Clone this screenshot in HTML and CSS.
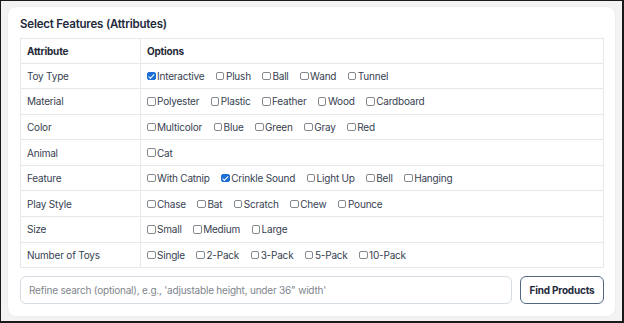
FILE: index.html
```html
<!DOCTYPE html>
<html>
<head>
<meta charset="utf-8">
<link rel="stylesheet" href="styles.css">
</head>
<body>
<div class="frame">
  <div class="card">
    <h2 class="title">Select Features (Attributes)</h2>
    <table class="attrs">
      <thead>
        <tr><th class="c1">Attribute</th><th>Options</th></tr>
      </thead>
      <tbody>
        <tr><td class="c1">Toy Type</td><td><div class="opts">
          <label><input type="checkbox" checked>Interactive</label>
          <label><input type="checkbox">Plush</label>
          <label><input type="checkbox">Ball</label>
          <label><input type="checkbox">Wand</label>
          <label><input type="checkbox">Tunnel</label>
        </div></td></tr>
        <tr><td class="c1">Material</td><td><div class="opts">
          <label><input type="checkbox">Polyester</label>
          <label><input type="checkbox">Plastic</label>
          <label><input type="checkbox">Feather</label>
          <label><input type="checkbox">Wood</label>
          <label><input type="checkbox">Cardboard</label>
        </div></td></tr>
        <tr><td class="c1">Color</td><td><div class="opts">
          <label><input type="checkbox">Multicolor</label>
          <label><input type="checkbox">Blue</label>
          <label><input type="checkbox">Green</label>
          <label><input type="checkbox">Gray</label>
          <label><input type="checkbox">Red</label>
        </div></td></tr>
        <tr><td class="c1">Animal</td><td><div class="opts">
          <label><input type="checkbox">Cat</label>
        </div></td></tr>
        <tr><td class="c1">Feature</td><td><div class="opts">
          <label><input type="checkbox">With Catnip</label>
          <label><input type="checkbox" checked>Crinkle Sound</label>
          <label><input type="checkbox">Light Up</label>
          <label><input type="checkbox">Bell</label>
          <label><input type="checkbox">Hanging</label>
        </div></td></tr>
        <tr><td class="c1">Play Style</td><td><div class="opts">
          <label><input type="checkbox">Chase</label>
          <label><input type="checkbox">Bat</label>
          <label><input type="checkbox">Scratch</label>
          <label><input type="checkbox">Chew</label>
          <label><input type="checkbox">Pounce</label>
        </div></td></tr>
        <tr><td class="c1">Size</td><td><div class="opts">
          <label><input type="checkbox">Small</label>
          <label><input type="checkbox">Medium</label>
          <label><input type="checkbox">Large</label>
        </div></td></tr>
        <tr><td class="c1">Number of Toys</td><td><div class="opts">
          <label><input type="checkbox">Single</label>
          <label><input type="checkbox">2-Pack</label>
          <label><input type="checkbox">3-Pack</label>
          <label><input type="checkbox">5-Pack</label>
          <label><input type="checkbox">10-Pack</label>
        </div></td></tr>
      </tbody>
    </table>
    <div class="search">
      <input class="refine" type="text" placeholder="Refine search (optional), e.g., 'adjustable height, under 36&quot; width'">
      <button class="find">Find Products</button>
    </div>
  </div>
</div>
</body>
</html>
```

FILE: styles.css
```css
* { box-sizing: border-box; }
html, body { margin: 0; padding: 0; }
body {
  font-family: Inter, "Noto Sans", sans-serif;
  color: #1f2937;
}
.frame {
  width: 624px;
  height: 323px;
  border: 1px solid #1a1a1a;
  border-right-width: 2px;
  border-bottom-width: 2px;
  background: #f3f3f3;
  padding: 6px 7px 0 7px;
}
.card {
  background: #fff;
  border-radius: 8px;
  box-shadow: 0 0 2px rgba(0,0,0,0.08);
  height: 309px;
  padding: 10px 11px 0 12px;
}
.title {
  margin: 0 0 6px 0;
  font-size: 11.5px;
  font-weight: 600;
  color: #1e2a3b;
  line-height: 15px;
  letter-spacing: -0.2px;
}
.attrs {
  width: 584px;
  border-collapse: collapse;
  font-size: 10px;
  letter-spacing: -0.2px;
  color: #374151;
}
.attrs th, .attrs td {
  border: 1px solid #e6e8eb;
  text-align: left;
  padding: 0 6px;
  height: 25.6px;
  vertical-align: middle;
}
.attrs th {
  font-weight: 700;
  color: #1f2937;
  height: 24.5px;
}
.attrs .c1 { width: 120px; }
.opts {
  display: flex;
  gap: 11.5px;
  align-items: center;
}
.opts label {
  display: flex;
  align-items: center;
  white-space: nowrap;
}
.opts input {
  -webkit-appearance: none;
  appearance: none;
  position: relative;
  width: 8.5px;
  height: 8.5px;
  margin: 0 1.5px 0 0;
  border: 1px solid #858a90;
  border-radius: 2px;
  background: #fff;
  flex: none;
}
.opts input:checked {
  background: #1d6fd6;
  border-color: #1d6fd6;
}
.opts input:checked::after {
  content: "";
  position: absolute;
  left: 2px;
  top: 0.2px;
  width: 2.4px;
  height: 4.6px;
  border: solid #fff;
  border-width: 0 1.4px 1.4px 0;
  transform: rotate(45deg);
}
.search {
  display: flex;
  gap: 8px;
  margin-top: 8px;
}
.refine {
  width: 492px;
  height: 28px;
  border: 1px solid #d6dce4;
  border-radius: 6px;
  padding: 0 8px;
  font-family: Inter, "Noto Sans", sans-serif;
  font-size: 10px;
  letter-spacing: -0.2px;
}
.refine::placeholder { color: #80858c; }
.find {
  width: 84px;
  height: 28px;
  border: 1.5px solid #52677f;
  border-radius: 6px;
  background: #fff;
  font-family: Inter, "Noto Sans", sans-serif;
  font-size: 10px;
  letter-spacing: -0.2px;
  font-weight: 700;
  color: #1e2a3b;
  padding: 0;
}
```
